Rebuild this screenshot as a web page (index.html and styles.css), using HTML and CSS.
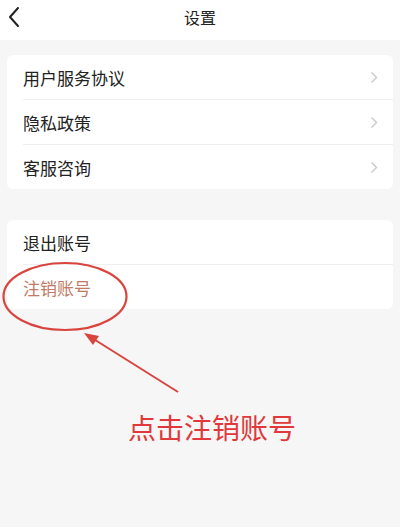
FILE: index.html
```html
<!DOCTYPE html>
<html lang="zh-CN">
<head>
<meta charset="utf-8">
<title>设置</title>
<link rel="stylesheet" href="styles.css">
</head>
<body>
<div class="page">
  <header class="header">
    <svg class="back" width="14" height="22" viewBox="0 0 14 22"><path d="M10 2 L2 11 L10 20" fill="none" stroke="#222" stroke-width="2" stroke-linecap="round" stroke-linejoin="round"/></svg>
    <div class="title">设置</div>
  </header>
  <section class="card card-first">
    <div class="row"><span class="label">用户服务协议</span><svg class="chev" width="8" height="13" viewBox="0 0 8 13"><path d="M1.5 1.5 L6.5 6.5 L1.5 11.5" fill="none" stroke="#c8c8c8" stroke-width="1.4"/></svg></div>
    <div class="row"><span class="label">隐私政策</span><svg class="chev" width="8" height="13" viewBox="0 0 8 13"><path d="M1.5 1.5 L6.5 6.5 L1.5 11.5" fill="none" stroke="#c8c8c8" stroke-width="1.4"/></svg></div>
    <div class="row last"><span class="label">客服咨询</span><svg class="chev" width="8" height="13" viewBox="0 0 8 13"><path d="M1.5 1.5 L6.5 6.5 L1.5 11.5" fill="none" stroke="#c8c8c8" stroke-width="1.4"/></svg></div>
  </section>
  <section class="card card-second">
    <div class="row"><span class="label">退出账号</span></div>
    <div class="row last"><span class="label danger">注销账号</span></div>
  </section>
  <div class="callout">点击注销账号</div>
  <svg class="annot" width="400" height="527" viewBox="0 0 400 527">
    <ellipse cx="65" cy="296.5" rx="61.5" ry="33.5" fill="none" stroke="#d9443f" stroke-width="2.2"/>
    <line x1="178" y1="392" x2="92" y2="338" stroke="#d9443f" stroke-width="2"/>
    <polygon points="84,333 99,336 93,345" fill="#d9443f"/>
  </svg>
</div>
</body>
</html>
```
FILE: styles.css
```css
html, body {
  margin: 0;
  padding: 0;
  background: #f6f6f6;
}
.page {
  position: relative;
  width: 400px;
  height: 527px;
  overflow: hidden;
  font-family: "Noto Sans CJK SC", "Noto Sans", sans-serif;
  color: #333;
}
.header {
  height: 40px;
  background: #fff;
  display: flex;
  justify-content: center;
  position: relative;
}
.back {
  position: absolute;
  left: 8px;
  top: 6px;
}
.title {
  font-size: 16px;
  line-height: 34px;
  color: #222;
}
.card {
  background: #fff;
  margin: 0 7px;
  border-radius: 6px;
}
.card-first {
  margin-top: 15px;
}
.card-second {
  margin-top: 31px;
}
.row {
  height: 44px;
  margin-left: 16px;
  padding-right: 15px;
  border-bottom: 1px solid #efefef;
  display: flex;
  align-items: center;
  justify-content: space-between;
}
.row.last {
  border-bottom: none;
}
.label {
  font-size: 17px;
  color: #222;
}
.label.danger {
  color: #c27a66;
}
.chev {
  display: block;
}
.callout {
  margin-top: 98px;
  margin-left: 128px;
  font-size: 28px;
  line-height: 40px;
  color: #e0383b;
}
.annot {
  position: absolute;
  left: 0;
  top: 0;
  pointer-events: none;
}
```
